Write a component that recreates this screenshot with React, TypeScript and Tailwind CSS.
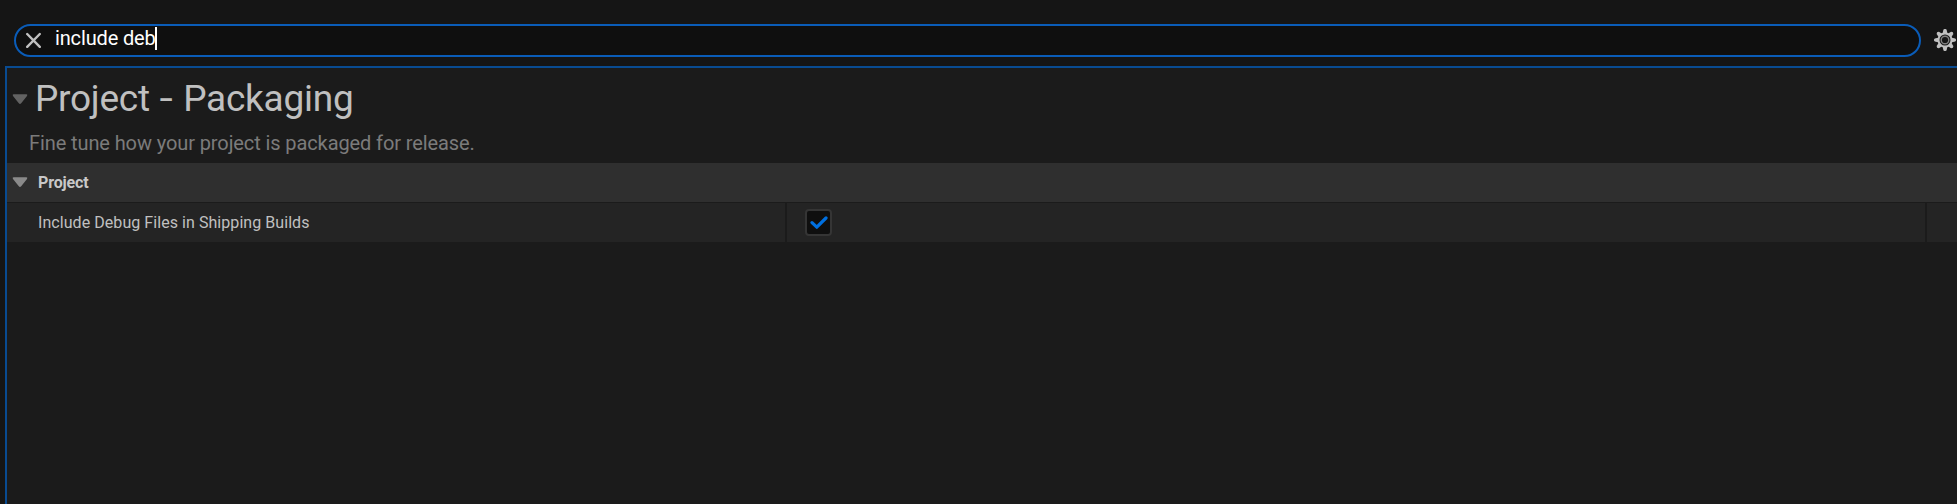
import React from "react";

function Expander({ className }: { className: string }) {
  return (
    <svg viewBox="0 0 16 11" className={`h-[11px] w-4 shrink-0 ${className}`} fill="currentColor">
      <path d="M1.6 0.3H14.4Q16 0.5 15 2L9.2 9.2Q8 10.8 6.8 9.2L1 2Q0 0.5 1.6 0.3Z" />
    </svg>
  );
}

function Gear() {
  return (
    <svg viewBox="-11 -11 22 22" className="h-[22px] w-[22px] shrink-0">
      <g fill="#c0c0c0">
        {[0, 45, 90, 135, 180, 225, 270, 315].map((a) => (
          <path key={a} d="M-2.6 -6L-1.6 -10.2Q0 -12 1.6 -10.2L2.6 -6Z" transform={`rotate(${a})`} />
        ))}
      </g>
      <circle r="6.5" fill="#151515" stroke="#c0c0c0" strokeWidth="2" />
      <circle r="3.8" fill="none" stroke="#808080" strokeWidth="1.4" />
    </svg>
  );
}

function SearchBar() {
  return (
    <div className="flex items-start pt-6 pl-[14px]">
      <div className="flex h-[33px] w-[1907px] shrink-0 items-start rounded-full border-2 border-[#0a5cb8] bg-[#0f0f0f]">
        <svg viewBox="0 0 16 16" className="mt-[6px] ml-[9px] h-4 w-4 shrink-0" stroke="#c0c0c0" strokeWidth="2.4" strokeLinecap="round">
          <path d="M2.2 2L14.8 14.8M14.8 2L2.2 14.8" />
        </svg>
        <span className="ml-[14px] w-[100px] text-[20px] leading-[24px] tracking-[-0.15px] whitespace-nowrap text-white">include deb</span>
        <span className="mt-[1px] h-[23px] w-[2px] bg-white" />
      </div>
      <div className="mt-[5px] ml-[13px] shrink-0">
        <Gear />
      </div>
    </div>
  );
}

export default function App() {
  return (
    <div className="flex h-[504px] w-[1957px] flex-col overflow-hidden bg-[#151515] font-['Roboto','Liberation_Sans',sans-serif]">
      <SearchBar />
      <main className="mt-[9px] ml-[5px] flex-1 border-t-2 border-l-2 border-[#094b91] bg-[#1b1b1b]">
        <header className="h-[95px]">
          <div className="flex h-[61px] items-center pl-[5px]">
            <Expander className="mt-[2px] text-[#626262]" />
            <h1 className="ml-[7px] text-[37px] leading-[61px] tracking-[-0.25px] whitespace-nowrap text-[#c0c0c0]">
              Project <span className="mr-[3px] ml-[2.5px] inline-block origin-center scale-x-[1.3]">-</span> Packaging
            </h1>
          </div>
          <p className="pl-[22px] text-[20px] leading-[28px] tracking-[-0.1px] whitespace-nowrap text-[#7b7b7b]">
            Fine tune how your project is packaged for release.
          </p>
        </header>
        <div className="flex h-[39px] items-center bg-[#2f2f2f] pl-[5px]">
          <Expander className="text-[#8a8a8a]" />
          <h2 className="ml-[10px] text-[16px] leading-[39px] font-bold tracking-[-0.15px] text-[#c8c8c8]">Project</h2>
        </div>
        <div className="mt-px flex h-[39px] gap-[2px]">
          <div className="w-[778px] bg-[#242424] pl-[31px] text-[16px] leading-[39px] tracking-[0.06px] whitespace-nowrap text-[#c0c0c0]">
            Include Debug Files in Shipping Builds
          </div>
          <div className="flex w-[1138px] items-start bg-[#242424] pt-[6px] pl-[18px]">
            <div className="flex h-[27px] w-[27px] items-center justify-center rounded-[4px] border-2 border-[#353535] bg-[#0f0f0f]">
              <svg viewBox="0 0 18 13" className="h-[13px] w-[18px]" fill="none" stroke="#0070e0" strokeWidth="3.2" strokeLinecap="round" strokeLinejoin="round">
                <path d="M2 6.6L6.8 11.2L16 2" />
              </svg>
            </div>
          </div>
          <div className="flex-1 bg-[#242424]" />
        </div>
      </main>
    </div>
  );
}
